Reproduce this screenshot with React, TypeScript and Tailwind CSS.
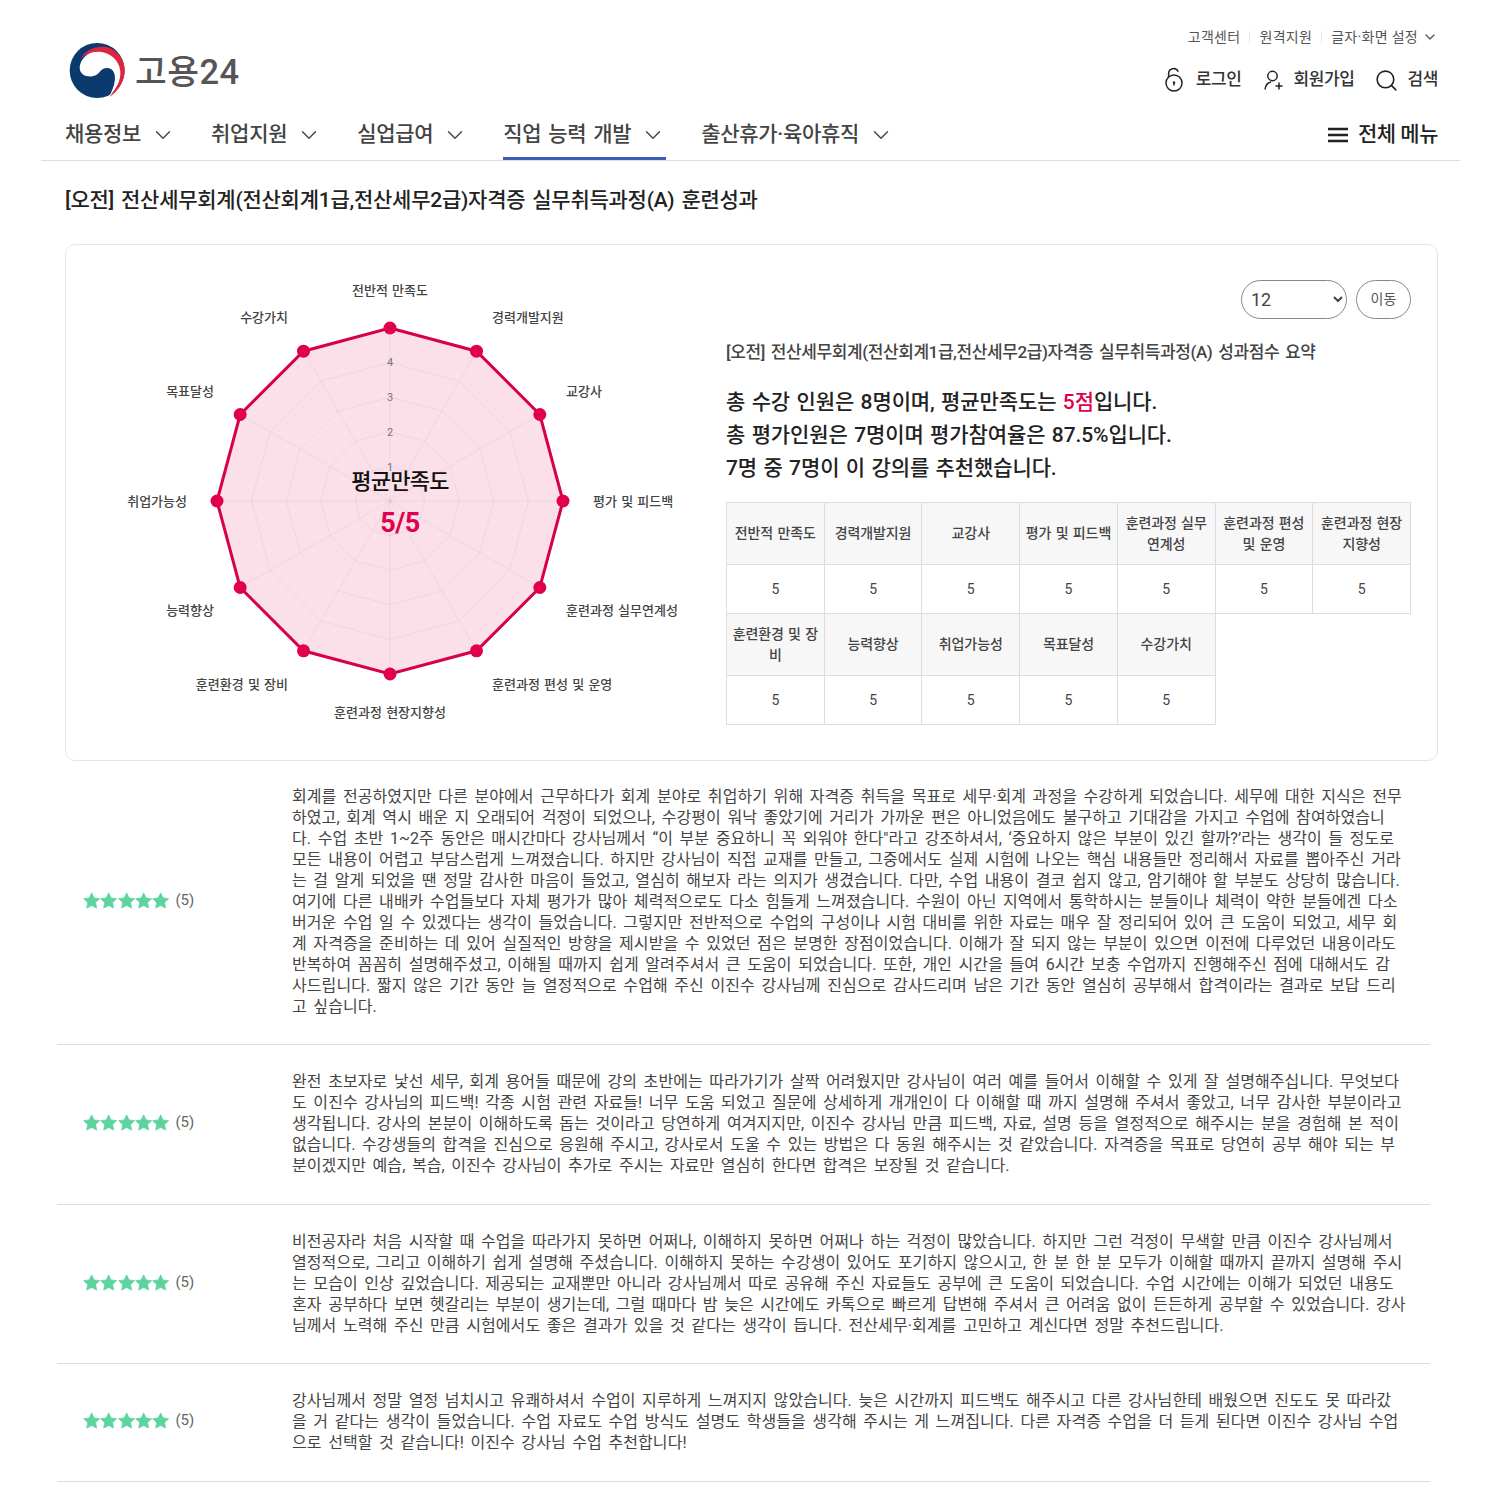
import React from "react";
import { ChevronDown, Search } from "lucide-react";

const navItems = [
  { label: "채용정보" },
  { label: "취업지원" },
  { label: "실업급여" },
  { label: "직업 능력 개발", active: true },
  { label: "출산휴가·육아휴직" },
];

const chartLabels = [
  { text: "전반적 만족도", x: 390, y: 290, anchor: "middle" },
  { text: "경력개발지원", x: 492, y: 317, anchor: "start" },
  { text: "교강사", x: 566, y: 391, anchor: "start" },
  { text: "평가 및 피드백", x: 593, y: 501, anchor: "start" },
  { text: "훈련과정 실무연계성", x: 566, y: 610, anchor: "start" },
  { text: "훈련과정 편성 및 운영", x: 492, y: 684, anchor: "start" },
  { text: "훈련과정 현장지향성", x: 390, y: 712, anchor: "middle" },
  { text: "훈련환경 및 장비", x: 288, y: 684, anchor: "end" },
  { text: "능력향상", x: 214, y: 610, anchor: "end" },
  { text: "취업가능성", x: 187, y: 501, anchor: "end" },
  { text: "목표달성", x: 214, y: 391, anchor: "end" },
  { text: "수강가치", x: 288, y: 317, anchor: "end" },
];

const scoreRows = [
  ["전반적 만족도", "경력개발지원", "교강사", "평가 및 피드백", "훈련과정 실무연계성", "훈련과정 편성 및 운영", "훈련과정 현장지향성"],
  ["훈련환경 및 장비", "능력향상", "취업가능성", "목표달성", "수강가치"],
];

const reviews = [
  {
    pad: "pt-[25px] pb-[27px]",
    lines: [
      "회계를 전공하였지만 다른 분야에서 근무하다가 회계 분야로 취업하기 위해 자격증 취득을 목표로 세무·회계 과정을 수강하게 되었습니다. 세무에 대한 지식은 전무",
      "하였고, 회계 역시 배운 지 오래되어 걱정이 되었으나, 수강평이 워낙 좋았기에 거리가 가까운 편은 아니었음에도 불구하고 기대감을 가지고 수업에 참여하였습니",
      "다. 수업 초반 1~2주 동안은 매시간마다 강사님께서 “이 부분 중요하니 꼭 외워야 한다\"라고 강조하셔서, ‘중요하지 않은 부분이 있긴 할까?’라는 생각이 들 정도로",
      "모든 내용이 어렵고 부담스럽게 느껴졌습니다. 하지만 강사님이 직접 교재를 만들고, 그중에서도 실제 시험에 나오는 핵심 내용들만 정리해서 자료를 뽑아주신 거라",
      "는 걸 알게 되었을 땐 정말 감사한 마음이 들었고, 열심히 해보자 라는 의지가 생겼습니다. 다만, 수업 내용이 결코 쉽지 않고, 암기해야 할 부분도 상당히 많습니다.",
      "여기에 다른 내배카 수업들보다 자체 평가가 많아 체력적으로도 다소 힘들게 느껴졌습니다. 수원이 아닌 지역에서 통학하시는 분들이나 체력이 약한 분들에겐 다소",
      "버거운 수업 일 수 있겠다는 생각이 들었습니다. 그렇지만 전반적으로 수업의 구성이나 시험 대비를 위한 자료는 매우 잘 정리되어 있어 큰 도움이 되었고, 세무 회",
      "계 자격증을 준비하는 데 있어 실질적인 방향을 제시받을 수 있었던 점은 분명한 장점이었습니다. 이해가 잘 되지 않는 부분이 있으면 이전에 다루었던 내용이라도",
      "반복하여 꼼꼼히 설명해주셨고, 이해될 때까지 쉽게 알려주셔서 큰 도움이 되었습니다. 또한, 개인 시간을 들여 6시간 보충 수업까지 진행해주신 점에 대해서도 감",
      "사드립니다. 짧지 않은 기간 동안 늘 열정적으로 수업해 주신 이진수 강사님께 진심으로 감사드리며 남은 기간 동안 열심히 공부해서 합격이라는 결과로 보답 드리",
      "고 싶습니다.",
    ],
  },
  {
    pad: "pt-[26px] pb-[28px]",
    lines: [
      "완전 초보자로 낯선 세무, 회계 용어들 때문에 강의 초반에는 따라가기가 살짝 어려웠지만 강사님이 여러 예를 들어서 이해할 수 있게 잘 설명해주십니다. 무엇보다",
      "도 이진수 강사님의 피드백! 각종 시험 관련 자료들! 너무 도움 되었고 질문에 상세하게 개개인이 다 이해할 때 까지 설명해 주셔서 좋았고, 너무 감사한 부분이라고",
      "생각됩니다. 강사의 본분이 이해하도록 돕는 것이라고 당연하게 여겨지지만, 이진수 강사님 만큼 피드백, 자료, 설명 등을 열정적으로 해주시는 분을 경험해 본 적이",
      "없습니다. 수강생들의 합격을 진심으로 응원해 주시고, 강사로서 도울 수 있는 방법은 다 동원 해주시는 것 같았습니다. 자격증을 목표로 당연히 공부 해야 되는 부",
      "분이겠지만 예습, 복습, 이진수 강사님이 추가로 주시는 자료만 열심히 한다면 합격은 보장될 것 같습니다.",
    ],
  },
  {
    pad: "pt-[26px] pb-[27px]",
    lines: [
      "비전공자라 처음 시작할 때 수업을 따라가지 못하면 어쩌나, 이해하지 못하면 어쩌나 하는 걱정이 많았습니다. 하지만 그런 걱정이 무색할 만큼 이진수 강사님께서",
      "열정적으로, 그리고 이해하기 쉽게 설명해 주셨습니다. 이해하지 못하는 수강생이 있어도 포기하지 않으시고, 한 분 한 분 모두가 이해할 때까지 끝까지 설명해 주시",
      "는 모습이 인상 깊었습니다. 제공되는 교재뿐만 아니라 강사님께서 따로 공유해 주신 자료들도 공부에 큰 도움이 되었습니다. 수업 시간에는 이해가 되었던 내용도",
      "혼자 공부하다 보면 헷갈리는 부분이 생기는데, 그럴 때마다 밤 늦은 시간에도 카톡으로 빠르게 답변해 주셔서 큰 어려움 없이 든든하게 공부할 수 있었습니다. 강사",
      "님께서 노력해 주신 만큼 시험에서도 좋은 결과가 있을 것 같다는 생각이 듭니다. 전산세무·회계를 고민하고 계신다면 정말 추천드립니다.",
    ],
  },
  {
    pad: "pt-[26px] pb-[28px]",
    lines: [
      "강사님께서 정말 열정 넘치시고 유쾌하셔서 수업이 지루하게 느껴지지 않았습니다. 늦은 시간까지 피드백도 해주시고 다른 강사님한테 배웠으면 진도도 못 따라갔",
      "을 거 같다는 생각이 들었습니다. 수업 자료도 수업 방식도 설명도 학생들을 생각해 주시는 게 느껴집니다. 다른 자격증 수업을 더 듣게 된다면 이진수 강사님 수업",
      "으로 선택할 것 같습니다! 이진수 강사님 수업 추천합니다!",
    ],
  },
];

// 12 spokes of the radar, clockwise from the top
const CX = 390;
const CY = 501;
const R = 173;
const polar = (i: number, r: number) => {
  const a = (i * Math.PI) / 6 - Math.PI / 2;
  return [CX + r * Math.cos(a), CY + r * Math.sin(a)];
};
const ring = (r: number) =>
  Array.from({ length: 12 }, (_, i) => polar(i, r).join(",")).join(" ");

const Logo = () => (
  <svg viewBox="28 24 170 164" className="w-[57px] h-[55px] shrink-0">
    <circle cx="112" cy="106" r="82" fill="#0b3a6e" />
    <path
      d="M60 100C60 70 90 45 125 45C165 45 185 75 185 105C185 140 165 165 148 184C165 150 170 125 160 108C150 95 130 95 118 112C108 125 85 128 70 118C63 112 60 105 60 100Z"
      fill="#fff"
    />
    <path
      d="M62 72C75 45 105 34 130 35C170 38 194 72 194 105C194 140 172 170 148 185C170 160 183 135 181 108C178 75 150 52 118 50C95 49 75 58 62 72Z"
      fill="#e0243f"
    />
  </svg>
);

const LockIcon = () => (
  <svg viewBox="0 0 20 26" className="w-[20px] h-[26px]" fill="none" stroke="#222" strokeWidth="1.5">
    <circle cx="10" cy="16" r="8" />
    <path d="M4.6 10.2V6.5a5 5 0 0 1 9.6-1.8" />
    <circle cx="10" cy="15.5" r="1.2" fill="#222" stroke="none" />
    <path d="M10 16v2.5" />
  </svg>
);

const UserPlusIcon = () => (
  <svg viewBox="0 0 22 22" className="w-[22px] h-[22px]" fill="none" stroke="#222" strokeWidth="1.5">
    <circle cx="9.5" cy="7" r="4.7" />
    <path d="M2 20.5c.4-4 2.6-7 6-7.6" />
    <path d="M16 13.5v7M12.5 17h7" />
  </svg>
);

const MenuIcon = () => (
  <svg viewBox="0 0 20 16" className="w-[20px] h-[16px]" fill="none" stroke="#222" strokeWidth="2.4">
    <path d="M0 2h20M0 8h20M0 14h20" />
  </svg>
);

const Stars = () => (
  <div className="flex">
    {[0, 1, 2, 3, 4].map((i) => (
      <svg
        key={i}
        viewBox="0.6 0.8 22.8 22"
        className="w-[17.3px] h-[17px]"
        fill="#5dd39e"
        stroke="#5dd39e"
        strokeWidth="1"
        strokeLinejoin="round"
      >
        <path d="M12 1.8l3.2 6.6 7.3 1-5.3 5.1 1.3 7.3L12 18.3l-6.5 3.5 1.3-7.3L1.5 9.4l7.3-1z" />
      </svg>
    ))}
  </div>
);

const RadarChart = () => (
  <svg viewBox="66 245 660 515" className="w-[660px] h-[515px] shrink-0">
    <polygon points={ring(R)} fill="#e0004d" fillOpacity="0.12" stroke="none" />
    {[1, 2, 3, 4].map((n) => (
      <polygon key={n} points={ring((R * n) / 5)} fill="none" stroke="#000" strokeOpacity="0.05" />
    ))}
    {Array.from({ length: 12 }, (_, i) => {
      const [x, y] = polar(i, R);
      return <line key={i} x1={CX} y1={CY} x2={x} y2={y} stroke="#000" strokeOpacity="0.05" />;
    })}
    <polygon points={ring(R)} fill="none" stroke="#d6004f" strokeWidth="3" />
    {Array.from({ length: 12 }, (_, i) => {
      const [x, y] = polar(i, R);
      return <circle key={i} cx={x} cy={y} r="6.5" fill="#e0004d" />;
    })}
    {[1, 2, 3, 4].map((n) => (
      <text key={n} x={CX} y={CY + 1 - 34.8 * n} fontSize="11" fill="#777" textAnchor="middle" dominantBaseline="central">
        {n}
      </text>
    ))}
    {chartLabels.map((l) => (
      <text
        key={l.text}
        x={l.x}
        y={l.y}
        fontSize="13"
        fontWeight="500"
        fill="#444"
        wordSpacing="1"
        textAnchor={l.anchor as "start" | "middle" | "end"}
        dominantBaseline="central"
      >
        {l.text}
      </text>
    ))}
    <text x="400" y="481" fontSize="22" fontWeight="500" fill="#111" letterSpacing="-0.7" textAnchor="middle" dominantBaseline="central">
      평균만족도
    </text>
    <text x="400" y="523" fontSize="27" fontWeight="700" fill="#e0004d" letterSpacing="-0.5" textAnchor="middle" dominantBaseline="central">
      5/5
    </text>
  </svg>
);

const App: React.FC = () => {
  return (
    <div className="w-[1500px] h-[1500px] overflow-hidden bg-white text-[#333] font-['Roboto','Noto_Sans_CJK_KR',sans-serif]">
      {/* Header */}
      <header className="ml-[41px] w-[1419px] h-[161px] border-b border-[#ddd] pl-[24px] pr-[22px] flex flex-col">
        <div className="flex justify-between h-[110px]">
          <div className="flex items-center gap-[9px] pl-[4px] pt-[30px]">
            <Logo />
            <span className="mt-[4px] text-[34.5px] font-medium text-[#555] tracking-[0.5px] leading-none">고용24</span>
          </div>
          <div className="flex flex-col items-end pt-[27px]">
            <div className="flex items-center h-[20px] text-[14px] text-[#555] tracking-[0.3px]">
              <span>고객센터</span>
              <span className="mx-[9px] w-px h-[12px] bg-[#e5e5e5]" />
              <span>원격지원</span>
              <span className="mx-[9px] w-px h-[12px] bg-[#e5e5e5]" />
              <span>글자·화면 설정</span>
              <ChevronDown className="w-[16px] h-[16px] ml-[4px]" strokeWidth={2} />
            </div>
            <div className="flex items-center mt-[19px] h-[28px] text-[17px] font-medium text-[#333] tracking-[-0.4px]">
              <LockIcon />
              <span className="ml-[12px]">로그인</span>
              <span className="ml-[21px]"><UserPlusIcon /></span>
              <span className="ml-[9px]">회원가입</span>
              <Search className="ml-[19px] w-[25px] h-[25px] text-[#222]" strokeWidth={1.5} />
              <span className="ml-[9px]">검색</span>
            </div>
          </div>
        </div>
        <nav className="flex justify-between h-[50px]">
          <div className="flex gap-[35px]">
            {navItems.map((item) => (
              <div
                key={item.label}
                className={`flex items-center pt-[3px] border-b-[3px] text-[21px] font-medium text-[#444] tracking-[-0.3px] [word-spacing:2px] ${
                  item.active ? "border-[#3f5bb5]" : "border-transparent"
                }`}
              >
                <span>{item.label}</span>
                <ChevronDown className="ml-[9px] w-[26px] h-[26px] text-[#444]" strokeWidth={1.3} />
              </div>
            ))}
          </div>
          <div className="flex items-center gap-[10px] text-[21px] font-medium text-[#222] tracking-[-0.5px]">
            <MenuIcon />
            <span>전체 메뉴</span>
          </div>
        </nav>
      </header>

      <main className="pl-[65px]">
        <h1 className="mt-[23px] text-[21px] font-medium text-[#222] leading-[32px] tracking-[-0.25px] [word-spacing:2px]">
          [오전] 전산세무회계(전산회계1급,전산세무2급)자격증 실무취득과정(A) 훈련성과
        </h1>

        {/* Score card */}
        <section className="mt-[28px] w-[1373px] h-[517px] border border-[#e5e5e5] rounded-[10px] flex">
          <RadarChart />
          <div className="w-[685px] pt-[35px]">
            <div className="flex justify-end gap-[9px]">
              <select
                defaultValue="12"
                className="w-[106px] h-[39px] pl-[5px] rounded-[20px] border border-[#888] bg-white text-[18px] text-[#444]"
              >
                <option value="12">12</option>
              </select>
              <button className="w-[55px] h-[39px] rounded-[20px] border border-[#888] bg-white text-[14px] text-[#555]">
                이동
              </button>
            </div>
            <h2 className="mt-[21px] text-[17px] font-medium text-[#444] leading-[24px] tracking-[-0.4px] [word-spacing:2px]">
              [오전] 전산세무회계(전산회계1급,전산세무2급)자격증 실무취득과정(A) 성과점수 요약
            </h2>
            <div className="mt-[22px] text-[21px] font-medium text-[#222] leading-[33px] tracking-[-0.1px] [word-spacing:1.3px]">
              <p>
                총 수강 인원은 8명이며, 평균만족도는 <span className="text-[#e0004d]">5점</span>입니다.
              </p>
              <p>총 평가인원은 7명이며 평가참여율은 87.5%입니다.</p>
              <p>7명 중 7명이 이 강의를 추천했습니다.</p>
            </div>
            <table className="mt-[17px] table-fixed border-collapse w-[685px] text-[14px] text-[#444] text-center tracking-[-0.1px] [word-spacing:1px]">
              <tbody>
                {scoreRows.map((row, r) => (
                  <React.Fragment key={r}>
                    <tr className="h-[62px] leading-[21px]">
                      {row.map((name) => (
                        <th key={name} className="w-[97.7px] px-[4px] font-medium border border-[#ddd] bg-[#f7f7f7]">
                          {name}
                        </th>
                      ))}
                    </tr>
                    <tr className="h-[49px]">
                      {row.map((name) => (
                        <td key={name} className="border border-[#ddd]">5</td>
                      ))}
                    </tr>
                  </React.Fragment>
                ))}
              </tbody>
            </table>
          </div>
        </section>

        {/* Reviews */}
        <div className="ml-[-8px] w-[1373px]">
          {reviews.map((review) => (
            <div key={review.lines[0]} className={`flex items-center border-b border-[#ddd] ${review.pad}`}>
              <div className="w-[235px] pl-[26px] pb-[3px] flex items-center gap-[6px] shrink-0">
                <Stars />
                <span className="text-[15px] text-[#666]">(5)</span>
              </div>
              <div className="w-[1113px] text-[16px] leading-[21px] text-[#444] tracking-[0.08px] [word-spacing:2.5px] whitespace-nowrap">
                {review.lines.map((line) => (
                  <p key={line}>{line}</p>
                ))}
              </div>
            </div>
          ))}
        </div>
      </main>
    </div>
  );
};

export default App;
